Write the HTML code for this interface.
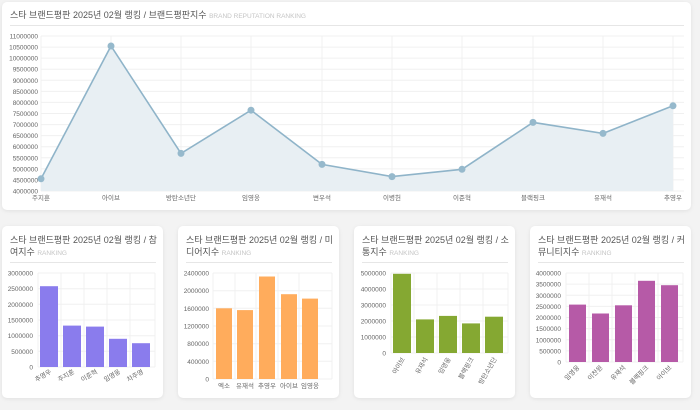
<!DOCTYPE html>
<html><head><meta charset="utf-8"><style>
body{margin:0;width:700px;height:410px;background:#f3f3f3;font-family:"Liberation Sans","Noto Sans CJK KR",sans-serif;overflow:hidden;position:relative}
.card{position:absolute;background:#fff;border-radius:5px;box-shadow:0 1px 4px rgba(0,0,0,.08)}
.t{position:absolute;color:#555;font-size:9px;line-height:12px}
.t small{color:#c4c4c4;font-size:6.5px}
.hr{position:absolute;height:1px;background:#e6e6e6}
svg{position:absolute;left:0;top:0}
svg text{font-family:"Liberation Sans","Noto Sans CJK KR",sans-serif;fill:#666}
</style></head><body>
<div class="card" style="left:2px;top:2px;width:689px;height:208px"></div>
<div class="card" style="left:2px;top:226px;width:161px;height:172px"></div>
<div class="card" style="left:178px;top:226px;width:161px;height:172px"></div>
<div class="card" style="left:354px;top:226px;width:161px;height:172px"></div>
<div class="card" style="left:530px;top:226px;width:161px;height:172px"></div>

<div class="t" style="left:10px;top:9px;white-space:nowrap">스타 브랜드평판 2025년 02월 랭킹 / 브랜드평판지수 <small>BRAND REPUTATION RANKING</small></div>
<div class="hr" style="left:10px;top:25px;width:674px"></div>

<div class="t" style="left:10px;top:234px;width:148px">스타 브랜드평판 2025년 02월 랭킹 / 참여지수 <small>RANKING</small></div>
<div class="hr" style="left:10px;top:262px;width:146px"></div>
<div class="t" style="left:186px;top:234px;width:148px">스타 브랜드평판 2025년 02월 랭킹 / 미디어지수 <small>RANKING</small></div>
<div class="hr" style="left:186px;top:262px;width:146px"></div>
<div class="t" style="left:362px;top:234px;width:148px">스타 브랜드평판 2025년 02월 랭킹 / 소통지수 <small>RANKING</small></div>
<div class="hr" style="left:362px;top:262px;width:146px"></div>
<div class="t" style="left:538px;top:234px;width:148px">스타 브랜드평판 2025년 02월 랭킹 / 커뮤니티지수 <small>RANKING</small></div>
<div class="hr" style="left:538px;top:262px;width:146px"></div>

<svg width="700" height="410">
<g stroke="#f0f0f0" stroke-width="1">
<line x1="41" y1="36" x2="684" y2="36"/><line x1="41" y1="47.1" x2="684" y2="47.1"/><line x1="41" y1="58.1" x2="684" y2="58.1"/><line x1="41" y1="69.2" x2="684" y2="69.2"/><line x1="41" y1="80.3" x2="684" y2="80.3"/><line x1="41" y1="91.4" x2="684" y2="91.4"/><line x1="41" y1="102.4" x2="684" y2="102.4"/><line x1="41" y1="113.5" x2="684" y2="113.5"/><line x1="41" y1="124.6" x2="684" y2="124.6"/><line x1="41" y1="135.6" x2="684" y2="135.6"/><line x1="41" y1="146.7" x2="684" y2="146.7"/><line x1="41" y1="157.8" x2="684" y2="157.8"/><line x1="41" y1="168.9" x2="684" y2="168.9"/><line x1="41" y1="179.9" x2="684" y2="179.9"/><line x1="41" y1="191" x2="684" y2="191"/>
<line x1="41" y1="36" x2="41" y2="191"/><line x1="111" y1="36" x2="111" y2="191"/><line x1="181" y1="36" x2="181" y2="191"/><line x1="251" y1="36" x2="251" y2="191"/><line x1="322" y1="36" x2="322" y2="191"/><line x1="392" y1="36" x2="392" y2="191"/><line x1="462" y1="36" x2="462" y2="191"/><line x1="533" y1="36" x2="533" y2="191"/><line x1="603" y1="36" x2="603" y2="191"/><line x1="673" y1="36" x2="673" y2="191"/>
</g>
<g font-size="6.5" text-anchor="end">
<text x="38" y="38.5">11000000</text><text x="38" y="49.6">10500000</text><text x="38" y="60.6">10000000</text><text x="38" y="71.7">9500000</text><text x="38" y="82.8">9000000</text><text x="38" y="93.9">8500000</text><text x="38" y="104.9">8000000</text><text x="38" y="116">7500000</text><text x="38" y="127.1">7000000</text><text x="38" y="138.1">6500000</text><text x="38" y="149.2">6000000</text><text x="38" y="160.3">5500000</text><text x="38" y="171.4">5000000</text><text x="38" y="182.4">4500000</text><text x="38" y="193.5">4000000</text>
</g>
<path d="M41,178.8 L111,46 L181,153.4 L251,110.2 L322,164.4 L392,176.6 L462,169.3 L533,122.4 L603,133.4 L673,105.8 L673,191 L41,191Z" fill="#e8eff3"/>
<path d="M41,178.8 L111,46 L181,153.4 L251,110.2 L322,164.4 L392,176.6 L462,169.3 L533,122.4 L603,133.4 L673,105.8" fill="none" stroke="#8fb4c9" stroke-width="1.6"/>
<g fill="#96b9cc"><circle cx="41" cy="178.8" r="3.5"/><circle cx="111" cy="46" r="3.5"/><circle cx="181" cy="153.4" r="3.5"/><circle cx="251" cy="110.2" r="3.5"/><circle cx="322" cy="164.4" r="3.5"/><circle cx="392" cy="176.6" r="3.5"/><circle cx="462" cy="169.3" r="3.5"/><circle cx="533" cy="122.4" r="3.5"/><circle cx="603" cy="133.4" r="3.5"/><circle cx="673" cy="105.8" r="3.5"/></g>
<g font-size="6.5" text-anchor="middle">
<text x="41" y="200">주지훈</text><text x="111" y="200">아이브</text><text x="181" y="200">방탄소년단</text><text x="251" y="200">임영웅</text><text x="322" y="200">변우석</text><text x="392" y="200">이병헌</text><text x="462" y="200">이준혁</text><text x="533" y="200">블랙핑크</text><text x="603" y="200">유재석</text><text x="673" y="200">추영우</text>
</g>

<g stroke="#f0f0f0"><line x1="38" y1="273" x2="155" y2="273"/><line x1="38" y1="288.7" x2="155" y2="288.7"/><line x1="38" y1="304.3" x2="155" y2="304.3"/><line x1="38" y1="320" x2="155" y2="320"/><line x1="38" y1="335.7" x2="155" y2="335.7"/><line x1="38" y1="351.3" x2="155" y2="351.3"/><line x1="38" y1="367" x2="155" y2="367"/>
<line x1="38" y1="273" x2="38" y2="367"/><line x1="61" y1="273" x2="61" y2="367"/><line x1="84" y1="273" x2="84" y2="367"/><line x1="107" y1="273" x2="107" y2="367"/><line x1="130" y1="273" x2="130" y2="367"/><line x1="155" y1="273" x2="155" y2="367"/></g>
<g font-size="6.5" text-anchor="end"><text x="33" y="275.5">3000000</text><text x="33" y="291.2">2500000</text><text x="33" y="306.8">2000000</text><text x="33" y="322.5">1500000</text><text x="33" y="338.2">1000000</text><text x="33" y="353.8">500000</text><text x="33" y="369.5">0</text></g>
<g fill="#8a7ced"><rect x="40" y="286.2" width="18" height="80.8"/><rect x="63" y="325.6" width="18" height="41.4"/><rect x="86" y="326.6" width="18" height="40.4"/><rect x="109" y="338.8" width="18" height="28.2"/><rect x="132" y="343.2" width="18" height="23.8"/></g>
<g font-size="6.5" text-anchor="end"><text transform="translate(52,373) rotate(-30)">추영우</text><text transform="translate(75,373) rotate(-30)">주지훈</text><text transform="translate(98,373) rotate(-30)">이준혁</text><text transform="translate(121,373) rotate(-30)">임영웅</text><text transform="translate(144,373) rotate(-30)">차주영</text></g>

<g stroke="#f0f0f0"><line x1="213" y1="273" x2="332" y2="273"/><line x1="213" y1="290.7" x2="332" y2="290.7"/><line x1="213" y1="308.3" x2="332" y2="308.3"/><line x1="213" y1="326" x2="332" y2="326"/><line x1="213" y1="343.7" x2="332" y2="343.7"/><line x1="213" y1="361.3" x2="332" y2="361.3"/><line x1="213" y1="379" x2="332" y2="379"/>
<line x1="213" y1="273" x2="213" y2="379"/><line x1="235" y1="273" x2="235" y2="379"/><line x1="256" y1="273" x2="256" y2="379"/><line x1="278" y1="273" x2="278" y2="379"/><line x1="299" y1="273" x2="299" y2="379"/><line x1="332" y1="273" x2="332" y2="379"/></g>
<g font-size="6.5" text-anchor="end"><text x="209" y="275.5">2400000</text><text x="209" y="293.2">2000000</text><text x="209" y="310.8">1600000</text><text x="209" y="328.5">1200000</text><text x="209" y="346.2">800000</text><text x="209" y="363.8">400000</text><text x="209" y="381.5">0</text></g>
<g fill="#ffac5c"><rect x="216" y="308.3" width="16" height="70.7"/><rect x="237" y="310.1" width="16" height="68.9"/><rect x="259" y="276.5" width="16" height="102.5"/><rect x="281" y="294.2" width="16" height="84.8"/><rect x="302" y="298.6" width="16" height="80.4"/></g>
<g font-size="6.5" text-anchor="middle"><text x="224" y="388">엑소</text><text x="245" y="388">유재석</text><text x="267" y="388">추영우</text><text x="289" y="388">아이브</text><text x="310" y="388">임영웅</text></g>

<g stroke="#f0f0f0"><line x1="391" y1="273" x2="508" y2="273"/><line x1="391" y1="289" x2="508" y2="289"/><line x1="391" y1="305" x2="508" y2="305"/><line x1="391" y1="321" x2="508" y2="321"/><line x1="391" y1="337" x2="508" y2="337"/><line x1="391" y1="353" x2="508" y2="353"/>
<line x1="391" y1="273" x2="391" y2="353"/><line x1="414" y1="273" x2="414" y2="353"/><line x1="437" y1="273" x2="437" y2="353"/><line x1="460" y1="273" x2="460" y2="353"/><line x1="483" y1="273" x2="483" y2="353"/><line x1="508" y1="273" x2="508" y2="353"/></g>
<g font-size="6.5" text-anchor="end"><text x="386" y="275.5">5000000</text><text x="386" y="291.5">4000000</text><text x="386" y="307.5">3000000</text><text x="386" y="323.5">2000000</text><text x="386" y="339.5">1000000</text><text x="386" y="355.5">0</text></g>
<g fill="#85a832"><rect x="393" y="273.8" width="18" height="79.2"/><rect x="416" y="319.4" width="18" height="33.6"/><rect x="439" y="315.9" width="18" height="37.1"/><rect x="462" y="323.4" width="18" height="29.6"/><rect x="485" y="316.7" width="18" height="36.3"/></g>
<g font-size="6.5" text-anchor="end"><text transform="translate(405,359) rotate(-60)">아이브</text><text transform="translate(428,359) rotate(-60)">유재석</text><text transform="translate(451,359) rotate(-60)">임영웅</text><text transform="translate(474,359) rotate(-60)">블랙핑크</text><text transform="translate(497,359) rotate(-60)">방탄소년단</text></g>

<g stroke="#f0f0f0"><line x1="566" y1="273" x2="683" y2="273"/><line x1="566" y1="284.1" x2="683" y2="284.1"/><line x1="566" y1="295.3" x2="683" y2="295.3"/><line x1="566" y1="306.4" x2="683" y2="306.4"/><line x1="566" y1="317.5" x2="683" y2="317.5"/><line x1="566" y1="328.6" x2="683" y2="328.6"/><line x1="566" y1="339.8" x2="683" y2="339.8"/><line x1="566" y1="350.9" x2="683" y2="350.9"/><line x1="566" y1="362" x2="683" y2="362"/>
<line x1="566" y1="273" x2="566" y2="362"/><line x1="589" y1="273" x2="589" y2="362"/><line x1="612" y1="273" x2="612" y2="362"/><line x1="635" y1="273" x2="635" y2="362"/><line x1="658" y1="273" x2="658" y2="362"/><line x1="683" y1="273" x2="683" y2="362"/></g>
<g font-size="6.5" text-anchor="end"><text x="561" y="275.5">4000000</text><text x="561" y="286.6">3500000</text><text x="561" y="297.8">3000000</text><text x="561" y="308.9">2500000</text><text x="561" y="320">2000000</text><text x="561" y="331.1">1500000</text><text x="561" y="342.3">1000000</text><text x="561" y="353.4">500000</text><text x="561" y="364.5">0</text></g>
<g fill="#b65aa7"><rect x="569" y="304.6" width="17" height="57.4"/><rect x="592" y="313.5" width="17" height="48.5"/><rect x="615" y="305.3" width="17" height="56.7"/><rect x="638" y="280.8" width="17" height="81.2"/><rect x="661" y="285.2" width="17" height="76.8"/></g>
<g font-size="6.5" text-anchor="end"><text transform="translate(580,368) rotate(-45)">임영웅</text><text transform="translate(603,368) rotate(-45)">이찬원</text><text transform="translate(626,368) rotate(-45)">유재석</text><text transform="translate(649,368) rotate(-45)">블랙핑크</text><text transform="translate(672,368) rotate(-45)">아이브</text></g>
</svg>
</body></html>
